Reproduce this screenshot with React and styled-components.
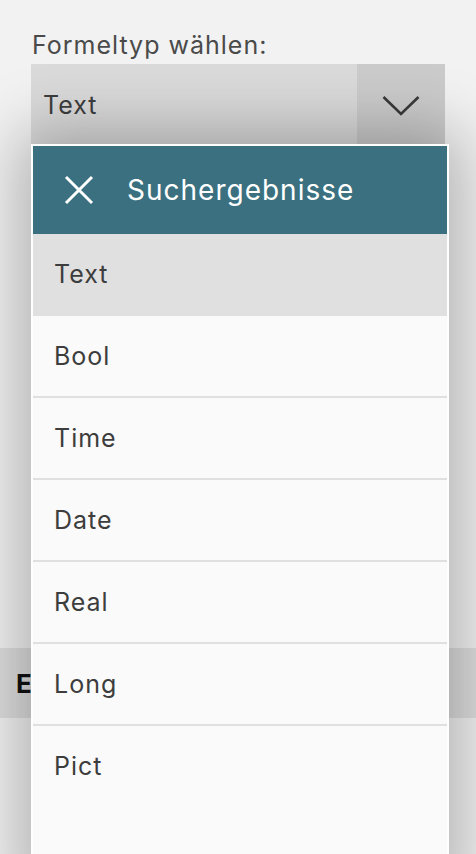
import React from "react";
import styled, { createGlobalStyle } from "styled-components";

const GlobalStyle = createGlobalStyle`
  html, body {
    margin: 0;
    padding: 0;
    background: #f2f2f2;
    font-family: Inter, "Noto Sans", sans-serif;
    letter-spacing: 1px;
    overflow: hidden;
  }
`;

const Page = styled.div`
  position: relative;
  height: 854px;
  overflow: hidden;
`;

const Form = styled.div`
  padding: 26px 31px 0 31px;
`;

const Label = styled.div`
  font-size: 25px;
  color: #4a4a4a;
  line-height: 38px;
  padding-left: 1px;
`;

const SelectBox = styled.div`
  display: flex;
  height: 81px;
  width: 414px;
  background: #dadada;
`;

const SelectValue = styled.div`
  flex: 1;
  display: flex;
  align-items: center;
  padding-left: 12px;
  font-size: 25px;
  color: #3d3d3d;
`;

const Toggle = styled.div`
  width: 88px;
  display: flex;
  align-items: center;
  justify-content: center;
  background: #cbcbcb;
`;

const SectionBar = styled.div`
  margin-top: 503px;
  height: 70px;
  display: flex;
  align-items: center;
  padding-left: 16px;
  background: #dedede;
  font-size: 26px;
  font-weight: 700;
  color: #111;
`;

const Dropdown = styled.div`
  position: absolute;
  top: 144px;
  left: 31px;
  width: 414px;
  bottom: -40px;
  border: 2px solid #ffffff;
  background: #fafafa;
  box-shadow: 0 0 60px 12px rgba(0, 0, 0, 0.28);
`;

const Header = styled.div`
  display: flex;
  align-items: center;
  height: 88px;
  background: #3a707f;
  color: #ffffff;
  font-size: 28px;
`;

const CloseButton = styled.div`
  width: 92px;
  display: flex;
  justify-content: center;
  align-items: center;
  padding-right: 2px;
`;

const Item = styled.div`
  height: 80px;
  display: flex;
  align-items: center;
  padding-left: 21px;
  font-size: 25px;
  color: #3d3d3d;
  background: ${(p) => (p.$active ? "#e0e0e0" : "#fafafa")};
  border-bottom: 2px solid #e0e0e0;

  &:last-child {
    border-bottom: none;
  }
`;

const Chevron = () => (
  <svg width="40" height="24" viewBox="0 0 40 24">
    <path d="M2.5 4 L20 21 L37.5 4" fill="none" stroke="#3a3a3a" strokeWidth="2.6" />
  </svg>
);

const CloseIcon = () => (
  <svg width="30" height="30" viewBox="0 0 30 30">
    <path d="M2 2 L28 28 M28 2 L2 28" fill="none" stroke="#ffffff" strokeWidth="3" />
  </svg>
);

const types = ["Text", "Bool", "Time", "Date", "Real", "Long", "Pict"];

export default function App() {
  return (
    <>
      <GlobalStyle />
      <Page>
        <Form>
          <Label>Formeltyp wählen:</Label>
          <SelectBox>
            <SelectValue>Text</SelectValue>
            <Toggle>
              <Chevron />
            </Toggle>
          </SelectBox>
        </Form>
        <SectionBar>Ergebnis</SectionBar>

        <Dropdown>
          <Header>
            <CloseButton>
              <CloseIcon />
            </CloseButton>
            Suchergebnisse
          </Header>
          {types.map((t) => (
            <Item key={t} $active={t === "Text"}>
              {t}
            </Item>
          ))}
        </Dropdown>
      </Page>
    </>
  );
}
